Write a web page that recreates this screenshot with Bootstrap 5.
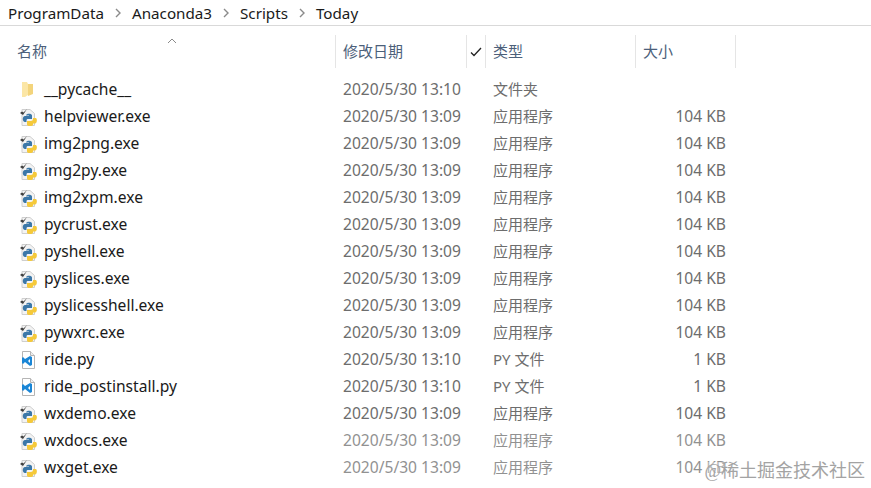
<!DOCTYPE html>
<html lang="zh">
<head>
    <meta charset="UTF-8">
    <meta name="viewport" content="width=device-width, initial-scale=1.0">
    <title>Today</title>
    <link href="https://cdn.jsdelivr.net/npm/bootstrap@5.3.0/dist/css/bootstrap.min.css" rel="stylesheet">
    <style>
        body { background: #fff; overflow: hidden; font-family: "Noto Sans", "Noto Sans CJK SC", sans-serif; }
        .crumbs { height: 26px; padding-left: 8px; border-bottom: 1px solid #d9d9d9; font-size: 15.2px; color: #1a1a1a; line-height: 24px; }
        .crumb-sep { width: 28px; }
        .head-row { height: 33px; margin-top: 9px; font-size: 15px; color: #4c607a; }
        .head-cell { height: 100%; border-right: 1px solid #e5e5e5; padding-left: 7px; line-height: 32px; }
        .col-name { width: 336px; }
        .col-date { width: 131px; }
        .col-tick { width: 19px; }
        .col-type { width: 150px; }
        .col-size { width: 100px; }
        .head-name { padding-left: 17px; }
        .sort-mark { position: absolute; left: 167px; top: 3px; }
        .file-list { margin-top: 8px; }
        .file-row { height: 27px; line-height: 27px; font-size: 15.6px; color: #6d6d6d; white-space: nowrap; }
        .file-name { color: #1a1a1a; gap: 7px; padding-left: 19px; }
        .file-date { padding-left: 7px; }
        .file-type { padding-left: 7px; margin-left: 19px; font-size: 15px; }
        .file-size { text-align: right; padding-right: 10px; }
        .file-row svg { flex: none; }
        .faded { opacity: .75; }
        .mark-text { position: absolute; right: 6px; bottom: 8px; font-family: "Liberation Serif", "Noto Sans CJK SC", serif; font-size: 18px; color: #a3a3a3; line-height: 1; background: rgba(255,255,255,.35); }
    </style>
</head>
<body>

    <svg width="0" height="0" class="position-absolute">
        <symbol id="ic-folder" viewBox="0 0 18 18">
            <path d="M3 1h5l1 2v11l-3 2H3z" fill="#fbe6a6"/>
            <path d="M9 3h5v10l-5 2z" fill="#f3d47c"/>
        </symbol>
        <symbol id="ic-exe" viewBox="0 0 18 18">
            <path d="M3 1.500h8l4.500 4v12H3z" fill="#f3f3f3" stroke="#cfcfcf"/>
            <path d="M1 5l3 2 4-6-3.500 3.500L3 3.500z" fill="#3f3f3f"/>
            <path d="M7 7.500c0-2.500 6-2.500 6 0V11H9c-1 0-1.500.5-1.500 1.500V14H6c-3 0-3-6 0-6h4V7.500z" fill="#3b77a8"/>
            <path d="M17 10c1.500 1 1 5.500-1 5.500h-2v1c0 2-6 2-6 0V13h4c1 0 2-1 2-2v-1z" fill="#f5c93a"/>
        </symbol>
        <symbol id="ic-py" viewBox="0 0 18 18">
            <path d="M3.500 .5h8l4 4v13h-12z" fill="#fff" stroke="#b5b5b5"/>
            <path d="M11.500 .5v4h4" fill="#eee" stroke="#b5b5b5"/>
            <path d="M11 5l2 1v8l-2 1-5-4-2 2-1-1v-5l1-1 2 2zM11 8l-2 2 2 2z" fill="#1a86d6" fill-rule="evenodd"/>
        </symbol>
    </svg>

    <nav class="crumbs d-flex align-items-center">
        <span>ProgramData</span>
        <span class="crumb-sep d-flex justify-content-center"><svg width="6" height="10" viewBox="0 0 6 10"><path d="M1 1l4 4-4 4" fill="none" stroke="#8a8a8a" stroke-width="1.400"/></svg></span>
        <span>Anaconda3</span>
        <span class="crumb-sep d-flex justify-content-center"><svg width="6" height="10" viewBox="0 0 6 10"><path d="M1 1l4 4-4 4" fill="none" stroke="#8a8a8a" stroke-width="1.400"/></svg></span>
        <span>Scripts</span>
        <span class="crumb-sep d-flex justify-content-center"><svg width="6" height="10" viewBox="0 0 6 10"><path d="M1 1l4 4-4 4" fill="none" stroke="#8a8a8a" stroke-width="1.400"/></svg></span>
        <span>Today</span>
    </nav>

    <div class="head-row d-flex">
        <div class="head-cell col-name head-name position-relative">名称
            <svg class="sort-mark" width="10" height="6" viewBox="0 0 10 6"><path d="M1 5l4-4 4 4" fill="none" stroke="#8a8a8a"/></svg>
        </div>
        <div class="head-cell col-date">修改日期</div>
        <div class="head-cell col-tick d-flex align-items-center justify-content-center p-0">
            <svg width="12" height="10" viewBox="0 0 12 10"><path d="M1 5.500l3 3 7-7.500" fill="none" stroke="#222" stroke-width="1.300"/></svg>
        </div>
        <div class="head-cell col-type">类型</div>
        <div class="head-cell col-size">大小</div>
    </div>

    <div class="file-list">
        <div class="file-row d-flex">
            <div class="col-name file-name d-flex align-items-center"><svg width="18" height="18"><use href="#ic-folder"/></svg>__pycache__</div>
            <div class="col-date file-date">2020/5/30 13:10</div>
            <div class="col-type file-type">文件夹</div>
            <div class="col-size file-size"></div>
        </div>
        <div class="file-row d-flex">
            <div class="col-name file-name d-flex align-items-center"><svg width="18" height="18"><use href="#ic-exe"/></svg>helpviewer.exe</div>
            <div class="col-date file-date">2020/5/30 13:09</div>
            <div class="col-type file-type">应用程序</div>
            <div class="col-size file-size">104 KB</div>
        </div>
        <div class="file-row d-flex">
            <div class="col-name file-name d-flex align-items-center"><svg width="18" height="18"><use href="#ic-exe"/></svg>img2png.exe</div>
            <div class="col-date file-date">2020/5/30 13:09</div>
            <div class="col-type file-type">应用程序</div>
            <div class="col-size file-size">104 KB</div>
        </div>
        <div class="file-row d-flex">
            <div class="col-name file-name d-flex align-items-center"><svg width="18" height="18"><use href="#ic-exe"/></svg>img2py.exe</div>
            <div class="col-date file-date">2020/5/30 13:09</div>
            <div class="col-type file-type">应用程序</div>
            <div class="col-size file-size">104 KB</div>
        </div>
        <div class="file-row d-flex">
            <div class="col-name file-name d-flex align-items-center"><svg width="18" height="18"><use href="#ic-exe"/></svg>img2xpm.exe</div>
            <div class="col-date file-date">2020/5/30 13:09</div>
            <div class="col-type file-type">应用程序</div>
            <div class="col-size file-size">104 KB</div>
        </div>
        <div class="file-row d-flex">
            <div class="col-name file-name d-flex align-items-center"><svg width="18" height="18"><use href="#ic-exe"/></svg>pycrust.exe</div>
            <div class="col-date file-date">2020/5/30 13:09</div>
            <div class="col-type file-type">应用程序</div>
            <div class="col-size file-size">104 KB</div>
        </div>
        <div class="file-row d-flex">
            <div class="col-name file-name d-flex align-items-center"><svg width="18" height="18"><use href="#ic-exe"/></svg>pyshell.exe</div>
            <div class="col-date file-date">2020/5/30 13:09</div>
            <div class="col-type file-type">应用程序</div>
            <div class="col-size file-size">104 KB</div>
        </div>
        <div class="file-row d-flex">
            <div class="col-name file-name d-flex align-items-center"><svg width="18" height="18"><use href="#ic-exe"/></svg>pyslices.exe</div>
            <div class="col-date file-date">2020/5/30 13:09</div>
            <div class="col-type file-type">应用程序</div>
            <div class="col-size file-size">104 KB</div>
        </div>
        <div class="file-row d-flex">
            <div class="col-name file-name d-flex align-items-center"><svg width="18" height="18"><use href="#ic-exe"/></svg>pyslicesshell.exe</div>
            <div class="col-date file-date">2020/5/30 13:09</div>
            <div class="col-type file-type">应用程序</div>
            <div class="col-size file-size">104 KB</div>
        </div>
        <div class="file-row d-flex">
            <div class="col-name file-name d-flex align-items-center"><svg width="18" height="18"><use href="#ic-exe"/></svg>pywxrc.exe</div>
            <div class="col-date file-date">2020/5/30 13:09</div>
            <div class="col-type file-type">应用程序</div>
            <div class="col-size file-size">104 KB</div>
        </div>
        <div class="file-row d-flex">
            <div class="col-name file-name d-flex align-items-center"><svg width="18" height="18"><use href="#ic-py"/></svg>ride.py</div>
            <div class="col-date file-date">2020/5/30 13:10</div>
            <div class="col-type file-type">PY 文件</div>
            <div class="col-size file-size">1 KB</div>
        </div>
        <div class="file-row d-flex">
            <div class="col-name file-name d-flex align-items-center"><svg width="18" height="18"><use href="#ic-py"/></svg>ride_postinstall.py</div>
            <div class="col-date file-date">2020/5/30 13:10</div>
            <div class="col-type file-type">PY 文件</div>
            <div class="col-size file-size">1 KB</div>
        </div>
        <div class="file-row d-flex">
            <div class="col-name file-name d-flex align-items-center"><svg width="18" height="18"><use href="#ic-exe"/></svg>wxdemo.exe</div>
            <div class="col-date file-date">2020/5/30 13:09</div>
            <div class="col-type file-type">应用程序</div>
            <div class="col-size file-size">104 KB</div>
        </div>
        <div class="file-row d-flex">
            <div class="col-name file-name d-flex align-items-center"><svg width="18" height="18"><use href="#ic-exe"/></svg>wxdocs.exe</div>
            <div class="col-date file-date faded">2020/5/30 13:09</div>
            <div class="col-type file-type faded">应用程序</div>
            <div class="col-size file-size faded">104 KB</div>
        </div>
        <div class="file-row d-flex">
            <div class="col-name file-name d-flex align-items-center"><svg width="18" height="18"><use href="#ic-exe"/></svg>wxget.exe</div>
            <div class="col-date file-date faded">2020/5/30 13:09</div>
            <div class="col-type file-type faded">应用程序</div>
            <div class="col-size file-size faded">104 KB</div>
        </div>
    </div>

    <div class="mark-text">@稀土掘金技术社区</div>

    <script src="https://cdn.jsdelivr.net/npm/bootstrap@5.3.0/dist/js/bootstrap.bundle.min.js"></script>
</body>
</html>
